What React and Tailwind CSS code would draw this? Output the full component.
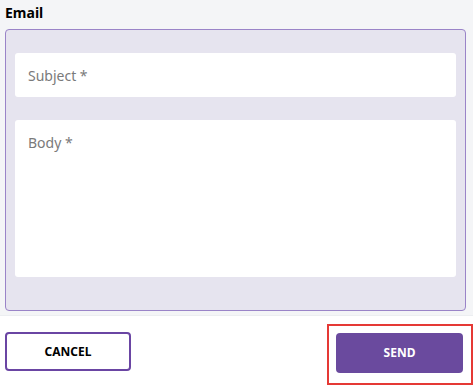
import React from 'react';

export default function App() {
  return (
    <div className="w-full h-[385px] flex flex-col bg-white overflow-hidden" style={{ fontFamily: '"Noto Sans", "Open Sans", sans-serif' }}>
      {/* Email form */}
      <div className="h-[316px] bg-[#f4f5f7] px-[5px] pt-[3px] border-b border-[#eceef1]">
        <h2 className="text-[14px] leading-[20px] font-bold text-black">Email</h2>
        <div className="mt-[6px] h-[282px] mr-[2px] rounded-[4px] border border-[#9a84c8] bg-[#e6e4ef] px-[9px] pt-[23px] flex flex-col gap-[23px]">
          <div className="h-[44px] rounded-[3px] bg-white flex items-center px-[13px]">
            <span className="text-[14px] leading-[20px] text-[#7a7a7a] pt-[2px]">Subject *</span>
          </div>
          <div className="h-[157px] rounded-[3px] bg-white px-[13px] pt-[10px]">
            <span className="text-[14px] leading-[20px] text-[#7a7a7a]">Body *</span>
          </div>
        </div>
      </div>

      {/* Actions */}
      <div className="flex justify-between items-start pl-[5px]">
        <button className="mt-[16px] w-[126px] h-[39px] rounded-[4px] border-2 border-[#6a45a3] bg-white text-[12px] font-bold text-black">
          CANCEL
        </button>
        <div className="mt-[8px] w-[146px] h-[61px] border-2 border-[#e53935] pl-[7px] pt-[7px]">
          <button className="w-[127px] h-[40px] rounded-[4px] bg-[#6a4a9e] text-white text-[12px] font-bold">
            SEND
          </button>
        </div>
      </div>
    </div>
  );
}
